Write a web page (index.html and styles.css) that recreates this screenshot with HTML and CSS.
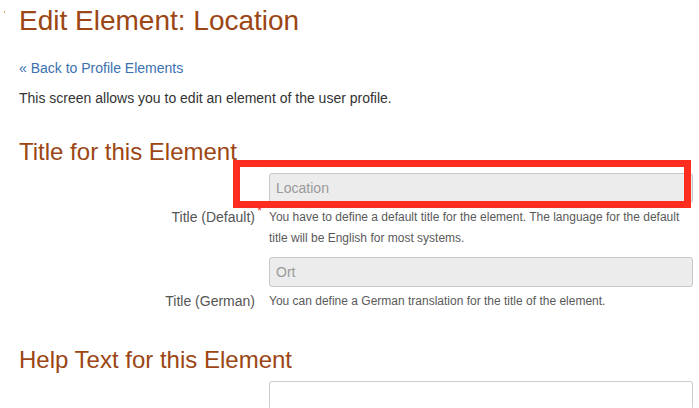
FILE: index.html
```html
<!DOCTYPE html>
<html lang="en">
<head>
<meta charset="utf-8">
<title>Edit Element: Location</title>
<link rel="stylesheet" href="styles.css">
</head>
<body>
<span class="corner-dot"></span>
<div class="page">
  <h1 class="page-title">Edit Element: Location</h1>
  <p class="back"><a href="#">« Back to Profile Elements</a></p>
  <p class="intro">This screen allows you to edit an element of the user profile.</p>

  <h2 class="section-title">Title for this Element</h2>
  <div class="form-row">
    <div class="control"><input class="field" type="text" value="Location" readonly></div>
    <label class="label required">Title (Default)</label>
    <div class="help">You have to define a default title for the element. The language for the default title will be English for most systems.</div>
  </div>
  <div class="form-row">
    <div class="control"><input class="field" type="text" value="Ort" readonly></div>
    <label class="label">Title (German)</label>
    <div class="help">You can define a German translation for the title of the element.</div>
  </div>

  <h2 class="section-title help-title">Help Text for this Element</h2>
  <div class="form-row">
    <div class="control"><textarea class="area"></textarea></div>
  </div>
</div>
<div class="highlight"></div>
</body>
</html>
```
FILE: styles.css
```css
html, body {
  margin: 0;
  padding: 0;
  background: #fff;
  overflow: hidden;
}
body {
  font-family: "Liberation Sans", Arial, Helvetica, sans-serif;
  color: #333;
  width: 699px;
  height: 408px;
  position: relative;
}
.corner-dot {
  position: absolute;
  left: 4px;
  top: 11px;
  width: 1px;
  height: 2px;
  background: #e0a060;
}
.page {
  padding: 5px 6px 0 19px;
}
.page-title {
  margin: 0;
  font-size: 28px;
  line-height: 31px;
  font-weight: normal;
  color: #9b4614;
}
.back {
  margin: 22px 0 0;
  font-size: 14px;
  line-height: 20px;
}
.back a {
  color: #3c71b0;
  text-decoration: none;
}
.intro {
  margin: 10px 0 0;
  font-size: 14px;
  line-height: 20px;
  color: #333;
}
.section-title {
  margin: 31px 0 0;
  font-size: 24px;
  line-height: 26px;
  font-weight: normal;
  color: #9b4614;
}
.help-title {
  margin-top: 35px;
}
.form-row {
  display: grid;
  grid-template-columns: 236px 1fr;
  column-gap: 14px;
}
.section-title + .form-row {
  margin-top: 8px;
}
.form-row + .form-row {
  margin-top: 8px;
}
.control {
  grid-column: 2;
  grid-row: 1;
}
.field {
  display: block;
  box-sizing: border-box;
  width: 100%;
  height: 30px;
  margin: 0;
  padding: 0 6px;
  border: 1px solid #c8c8c8;
  border-radius: 3px;
  background: #ececec;
  font-family: inherit;
  font-size: 14px;
  color: #9a9a9a;
  outline: none;
}
.area {
  display: block;
  box-sizing: border-box;
  width: 100%;
  height: 27px;
  margin: 0;
  border: 1px solid #cccccc;
  border-bottom-color: transparent;
  border-radius: 3px 3px 0 0;
  background: #fff;
  resize: none;
}
.label {
  grid-column: 1;
  grid-row: 2;
  justify-self: end;
  position: relative;
  margin-top: 4px;
  font-size: 14px;
  line-height: 21px;
  color: #555;
}
.label.required::after {
  content: "*";
  position: absolute;
  right: -7px;
  top: -6px;
  font-size: 12px;
  color: #e0302a;
}
.help {
  grid-column: 2;
  grid-row: 2;
  margin-top: 4px;
  font-size: 12px;
  line-height: 21px;
  color: #5a5a5a;
}
.highlight {
  position: absolute;
  left: 233px;
  top: 160px;
  width: 444px;
  height: 34px;
  border: 7px solid #fd2d1f;
}
```
